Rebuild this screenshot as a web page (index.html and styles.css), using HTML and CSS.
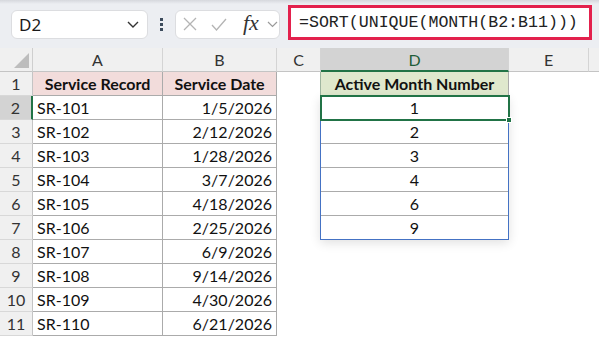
FILE: index.html
```html
<!DOCTYPE html>
<html lang="en">
<head>
    <meta charset="UTF-8">
    <title>Active Month Number</title>
    <link rel="stylesheet" href="styles.css">
</head>
<body>
    <div class="toolbar">
        <div class="name-box">
            <span>D2</span>
            <svg width="12" height="7" viewBox="0 0 12 7"><path d="M1 1 L6 6 L11 1" fill="none" stroke="#333" stroke-width="1.4"/></svg>
        </div>
        <div class="dots"><i></i><i></i><i></i></div>
        <div class="fx-box">
            <svg class="ic-x" width="14" height="14" viewBox="0 0 14 14"><path d="M1 1 L13 13 M13 1 L1 13" stroke="#b4b4b4" stroke-width="1.3"/></svg>
            <svg class="ic-ok" width="16" height="13" viewBox="0 0 16 13"><path d="M1 7 L5.5 12 L15 1" fill="none" stroke="#b4b4b4" stroke-width="1.3"/></svg>
            <span class="fx">fx</span>
            <svg class="ic-dd" width="11" height="7" viewBox="0 0 11 7"><path d="M1 1 L5.5 5.5 L10 1" fill="none" stroke="#9a9a9a" stroke-width="1.2"/></svg>
        </div>
        <div class="formula">=SORT(UNIQUE(MONTH(B2:B11)))</div>
    </div>

    <div class="sheet">
        <!-- header row -->
        <div class="corner"><span class="tri"></span></div>
        <div class="colhdr">A</div>
        <div class="colhdr">B</div>
        <div class="colhdr">C</div>
        <div class="colhdr active">D</div>
        <div class="colhdr">E</div>
        <div class="colhdr last"></div>

        <!-- row 1 -->
        <div class="rowhdr">1</div>
        <div class="cell head-pink">Service Record</div>
        <div class="cell head-pink">Service Date</div>
        <div class="blank"></div>
        <div class="cell head-green">Active Month Number</div>
        <div class="blank"></div>
        <div class="blank"></div>

        <!-- spilled result D2:D7 -->
        <div class="spill">
            <div class="num">1</div>
            <div class="num">2</div>
            <div class="num">3</div>
            <div class="num">4</div>
            <div class="num">6</div>
            <div class="num last">9</div>
            <div class="selected"><span class="handle"></span></div>
        </div>

        <div class="rowhdr active">2</div>
        <div class="cell">SR-101</div>
        <div class="cell date">1/5/2026</div>
        <div class="blank"></div>
        <div class="blank"></div>
        <div class="blank"></div>

        <div class="rowhdr">3</div>
        <div class="cell">SR-102</div>
        <div class="cell date">2/12/2026</div>
        <div class="blank"></div>
        <div class="blank"></div>
        <div class="blank"></div>

        <div class="rowhdr">4</div>
        <div class="cell">SR-103</div>
        <div class="cell date">1/28/2026</div>
        <div class="blank"></div>
        <div class="blank"></div>
        <div class="blank"></div>

        <div class="rowhdr">5</div>
        <div class="cell">SR-104</div>
        <div class="cell date">3/7/2026</div>
        <div class="blank"></div>
        <div class="blank"></div>
        <div class="blank"></div>

        <div class="rowhdr">6</div>
        <div class="cell">SR-105</div>
        <div class="cell date">4/18/2026</div>
        <div class="blank"></div>
        <div class="blank"></div>
        <div class="blank"></div>

        <div class="rowhdr">7</div>
        <div class="cell">SR-106</div>
        <div class="cell date">2/25/2026</div>
        <div class="blank"></div>
        <div class="blank"></div>
        <div class="blank"></div>

        <div class="rowhdr">8</div>
        <div class="cell">SR-107</div>
        <div class="cell date">6/9/2026</div>
        <div class="blank"></div>
        <div class="blank"></div>
        <div class="blank"></div>
        <div class="blank"></div>

        <div class="rowhdr">9</div>
        <div class="cell">SR-108</div>
        <div class="cell date">9/14/2026</div>
        <div class="blank"></div>
        <div class="blank"></div>
        <div class="blank"></div>
        <div class="blank"></div>

        <div class="rowhdr">10</div>
        <div class="cell">SR-109</div>
        <div class="cell date">4/30/2026</div>
        <div class="blank"></div>
        <div class="blank"></div>
        <div class="blank"></div>
        <div class="blank"></div>

        <div class="rowhdr">11</div>
        <div class="cell">SR-110</div>
        <div class="cell date">6/21/2026</div>
        <div class="blank"></div>
        <div class="blank"></div>
        <div class="blank"></div>
        <div class="blank"></div>
    </div>
</body>
</html>
```

FILE: styles.css
```css
* {
    box-sizing: border-box;
}
body {
    margin: 0;
    width: 599px;
    height: 337px;
    overflow: hidden;
    background-color: white;
    font-family: Lato, 'Noto Sans', sans-serif;
    color: #111;
}
.toolbar {
    height: 48px;
    display: flex;
    align-items: center;
    background: linear-gradient(#d6d8dd 0, #eceef2 4px, #eceef2 100%);
    padding-left: 11px;
}
.name-box {
    width: 137px;
    height: 29px;
    background-color: white;
    border: 1px solid #dcdde0;
    border-radius: 6px;
    display: flex;
    align-items: center;
    justify-content: space-between;
    padding: 0 8px 0 7px;
    font-family: 'Noto Sans', sans-serif;
    font-size: 17px;
    color: #1a1a1a;
}
.dots {
    width: 27px;
    display: flex;
    flex-direction: column;
    align-items: center;
    gap: 2px;
}
.dots i {
    width: 3px;
    height: 3px;
    background-color: #3c4b5c;
}
.fx-box {
    width: 105px;
    height: 29px;
    background-color: white;
    border: 1px solid #dcdde0;
    border-radius: 6px;
    display: flex;
    align-items: center;
    padding-left: 7px;
}
.ic-ok {
    margin-left: 14px;
}
.fx {
    font-family: 'Liberation Serif', serif;
    font-style: italic;
    font-size: 22px;
    color: #333;
    margin-left: 16px;
    line-height: 1;
    margin-top: -2px;
}
.ic-dd {
    margin-left: 8px;
}
.formula {
    margin-left: 8px;
    margin-top: -3px;
    width: 304px;
    height: 35px;
    border: 3px solid #e3214d;
    background-color: white;
    font-family: 'Liberation Mono', monospace;
    font-size: 16.6px;
    color: #222;
    line-height: 30px;
    padding-left: 8px;
    white-space: nowrap;
}

.sheet {
    display: grid;
    grid-template-columns: 33px 130px 114px 44px 188px 80px 1fr;
    grid-template-rows: repeat(12, 24px);
    font-size: 16px;
}
.corner {
    background-color: #f0f0f0;
    border-right: 1px solid #cfcfcf;
    border-bottom: 1px solid #c4c4c4;
    position: relative;
}
.tri {
    position: absolute;
    right: 3px;
    bottom: 3px;
    width: 0;
    height: 0;
    border-left: 15px solid transparent;
    border-bottom: 15px solid #bdbdbd;
}
.colhdr {
    background-color: #f0f0f0;
    border-right: 1px solid #d4d4d4;
    border-bottom: 1px solid #c4c4c4;
    text-align: center;
    line-height: 24px;
    color: #333;
}
.colhdr.active {
    background-color: #d3d3d3;
    border-bottom: 2px solid #217346;
    color: #1e5e39;
}
.colhdr.last {
    border-right: none;
}
.rowhdr {
    background-color: #f0f0f0;
    border-right: 1px solid #c4c4c4;
    border-bottom: 1px solid #d8d8d8;
    text-align: center;
    line-height: 24px;
    color: #333;
}
.rowhdr.active {
    background-color: #d3d3d3;
    border-right: 2px solid #217346;
}
.cell {
    border-right: 1px solid #ababab;
    border-bottom: 1px solid #ababab;
    line-height: 24px;
    padding: 0 4px;
    white-space: nowrap;
}
.date {
    text-align: right;
}
.head-pink {
    background-color: #f2dcdb;
    font-weight: bold;
    text-align: center;
}
.head-green {
    background-color: #dfe8cd;
    font-weight: bold;
    text-align: center;
    border-left: 1px solid #9fb59f;
    margin-left: -1px;
}
.spill {
    grid-column: 5;
    grid-row: 3 / 9;
    position: relative;
    border: 1px solid #4472c4;
    border-top: none;
    margin-left: -1px;
    box-shadow: 0 3px 10px rgba(0, 0, 0, 0.12);
    background-color: white;
    display: flex;
    flex-direction: column;
}
.num {
    height: 24px;
    line-height: 24px;
    text-align: center;
    border-bottom: 1px solid #ababab;
}
.num.last {
    height: 23px;
    border-bottom: none;
}
.selected {
    position: absolute;
    left: -1px;
    top: -1px;
    width: 190px;
    height: 26px;
    border: 2px solid #217346;
}
.handle {
    position: absolute;
    right: -4px;
    bottom: -4px;
    width: 6px;
    height: 6px;
    background-color: #217346;
    border: 1px solid white;
}
```
